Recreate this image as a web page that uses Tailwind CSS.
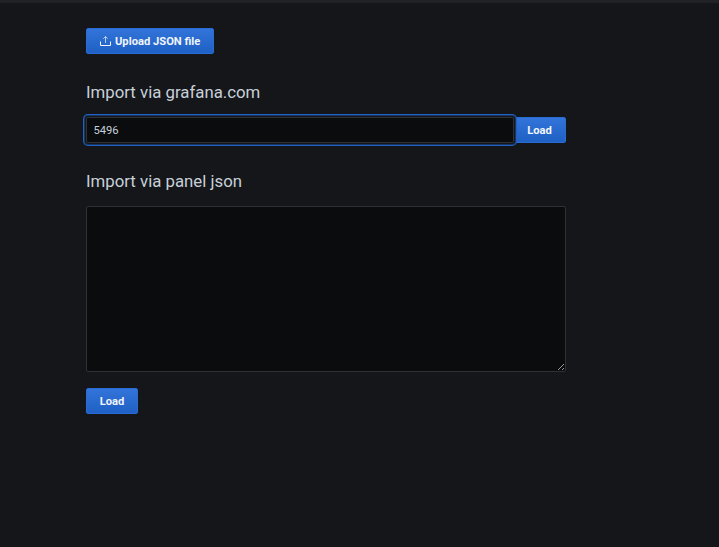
<!DOCTYPE html>
<html lang="en">
<head>
    <meta charset="UTF-8">
    <meta name="viewport" content="width=device-width, initial-scale=1.0">
    <title>Import dashboard</title>
    <script src="https://cdn.jsdelivr.net/npm/@tailwindcss/browser@4"></script>
</head>
<body class="h-screen overflow-hidden bg-[#15161a] border-t-3 border-[#202226] font-[Roboto,sans-serif] text-[#c7d0d9]">
    <main class="ml-[86px] w-[480px] pt-[25px]">
        <!-- Upload -->
        <button class="flex h-[26px] w-32 items-center rounded-xs border border-[#2a6bd6] bg-linear-to-b from-[#3274d9] to-[#1f60c4] pl-[13px] text-[11.2px] font-bold text-[#f1f5fc]">
            <svg class="size-3" viewBox="0 0 12 12" fill="none" stroke="currentColor">
                <path d="M.5 6.5v4h10v-4"/>
                <path d="M5.5 8V1.5M3.3 3.7l2.2-2.2 2.2 2.2" stroke-opacity="0.7"/>
            </svg>
            <span class="ml-[3px] pt-0.5">Upload JSON file</span>
        </button>

        <!-- Import via grafana.com -->
        <h2 class="mt-[27px] text-[16.8px] leading-[22px]">Import via grafana.com</h2>
        <form class="mt-[14px] flex h-[26px]">
            <input type="text" value="5496" class="z-10 w-[428px] rounded-xs border border-[#2c3235] bg-[#0b0c0e] px-[6.5px] pt-0.5 text-[11.2px] shadow-[0_0_0_1px_#15161a,0_0_0_2px_#193561,0_0_0_3px_#1f60c4] outline-none">
            <button type="button" class="w-[52px] rounded-r-xs border border-[#2a6bd6] bg-linear-to-b from-[#3274d9] to-[#1f60c4] pt-0.5 pr-px text-[11.2px] font-bold text-[#f1f5fc]">Load</button>
        </form>

        <!-- Import via panel json -->
        <h2 class="mt-[27px] text-[16.8px] leading-[22px]">Import via panel json</h2>
        <textarea class="mt-[14px] block h-[166px] w-full resize rounded-xs border border-[#2c3235] bg-[#0b0c0e] outline-none"></textarea>
        <button class="mt-4 h-[26px] w-[52px] rounded-xs border border-[#2a6bd6] bg-linear-to-b from-[#3274d9] to-[#1f60c4] pt-0.5 text-[11.2px] font-bold text-[#f1f5fc]">Load</button>
    </main>
</body>
</html>
